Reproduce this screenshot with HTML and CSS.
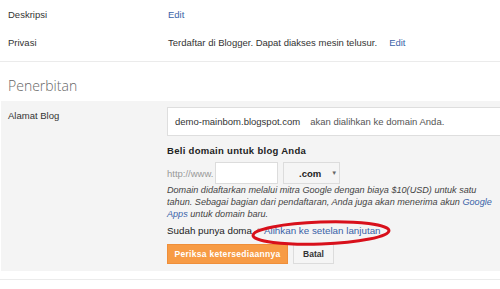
FILE: index.html
```html
<!DOCTYPE html>
<html>
<head>
<meta charset="utf-8">
<link rel="stylesheet" href="styles.css">
</head>
<body>
<div class="page">
  <div class="row">
    <div class="label">Deskripsi</div>
    <div class="value"><a class="link">Edit</a></div>
  </div>
  <div class="row">
    <div class="label">Privasi</div>
    <div class="value">Terdaftar di Blogger. Dapat diakses mesin telusur.<a class="link edit-gap">Edit</a></div>
  </div>
  <div class="divider"></div>
  <h2 class="section-title">Penerbitan</h2>
  <div class="panel">
    <div class="panel-label">Alamat Blog</div>
    <div class="panel-value">
      <div class="redirect-box"><span>demo-mainbom.blogspot.com</span><span class="redirect-note">akan dialihkan ke domain Anda.</span></div>
      <h3 class="buy-title">Beli domain untuk blog Anda</h3>
      <div class="domain-row">
        <span class="prefix">http://www.</span>
        <span class="domain-input"></span>
        <span class="tld-select"><b>.com</b><span class="caret">▼</span></span>
      </div>
      <p class="note">Domain didaftarkan melalui mitra Google dengan biaya $10(USD) untuk satu tahun. Sebagai bagian dari pendaftaran, Anda juga akan menerima akun <a class="link">Google</a><br><a class="link">Apps</a> untuk domain baru.</p>
      <div class="have-domain">
        <span>Sudah punya doma</span><span class="tick">✓</span><a class="link">Alihkan ke setelan lanjutan</a>
        <svg class="circle" width="144" height="30" viewBox="0 0 144 30"><ellipse cx="72" cy="15" rx="68" ry="11" fill="none" stroke="#d8101b" stroke-width="3" transform="rotate(-2 72 15)"/></svg>
      </div>
      <div class="actions">
        <span class="btn btn-orange">Periksa ketersediaannya</span>
        <span class="btn btn-gray">Batal</span>
      </div>
    </div>
  </div>
  <div class="divider bottom"></div>
</div>
</body>
</html>
```

FILE: styles.css
```css
html, body {
  margin: 0;
  padding: 0;
  background: #fff;
  overflow: hidden;
}
body {
  font-family: "Liberation Sans", Arial, sans-serif;
  font-size: 9.5px;
  color: #333;
}
.page {
  width: 500px;
  padding-top: 1px;
}
.row {
  display: grid;
  grid-template-columns: 160px 1fr;
  padding-left: 8px;
  height: 28px;
  line-height: 28px;
  white-space: nowrap;
}
.link {
  color: #3a63a8;
  text-decoration: none;
}
.edit-gap {
  margin-left: 12px;
}
.divider {
  height: 1px;
  background: #ebebeb;
  margin-top: 4px;
}
.divider.bottom {
  margin-top: 8px;
}
.section-title {
  margin: 14px 0 5px 8px;
  font-family: "Open Sans", sans-serif;
  font-weight: 300;
  font-size: 14px;
  line-height: 20px;
  color: #666;
}
.panel {
  margin-left: 1px;
  background: #f4f4f4;
  display: grid;
  grid-template-columns: 159px 1fr;
  padding: 6px 0 7px 7px;
}
.panel-label {
  padding-top: 3px;
  line-height: 12px;
}
.panel-value {
  min-width: 0;
}
.redirect-box {
  box-sizing: border-box;
  width: 340px;
  height: 29px;
  background: #fff;
  border: 1px solid #dedede;
  padding-left: 7px;
  line-height: 27px;
  white-space: nowrap;
}
.redirect-note {
  margin-left: 10px;
  color: #555;
}
.buy-title {
  margin: 9px 0 5px;
  font-size: 9.5px;
  font-weight: bold;
  line-height: 12px;
  letter-spacing: 0.3px;
  color: #222;
}
.domain-row {
  display: flex;
  align-items: center;
  height: 22px;
}
.prefix {
  color: #999;
  width: 48px;
}
.domain-input {
  box-sizing: border-box;
  width: 63px;
  height: 22px;
  background: #fff;
  border: 1px solid #dcdcdc;
}
.tld-select {
  box-sizing: border-box;
  margin-left: 5px;
  width: 57px;
  height: 22px;
  background: #f5f5f5;
  border: 1px solid #dcdcdc;
  display: flex;
  align-items: center;
  padding-left: 15px;
  color: #222;
}
.caret {
  font-size: 6px;
  color: #666;
  margin-left: 10px;
}
.note {
  margin: 0;
  font-style: italic;
  font-size: 9.1px;
  line-height: 12px;
  color: #444;
  width: 330px;
}
.have-domain {
  position: relative;
  margin-top: 5px;
  font-size: 9.8px;
  line-height: 12px;
  white-space: nowrap;
  color: #222;
}
.tick {
  color: #888;
  margin: 0 3px 0 1px;
  font-size: 9px;
}
.circle {
  position: absolute;
  left: 82px;
  top: -7px;
}
.actions {
  margin-top: 7px;
  display: flex;
  gap: 5px;
}
.btn {
  box-sizing: border-box;
  height: 20px;
  line-height: 18px;
  font-weight: bold;
  font-size: 8.5px;
  text-align: center;
}
.btn-orange {
  width: 121px;
  background: #f79b45;
  border: 1px solid #ef8f3a;
  color: #fff;
  letter-spacing: 0.3px;
}
.btn-gray {
  width: 41px;
  background: #f5f5f5;
  border: 1px solid #dcdcdc;
  color: #333;
}
```
